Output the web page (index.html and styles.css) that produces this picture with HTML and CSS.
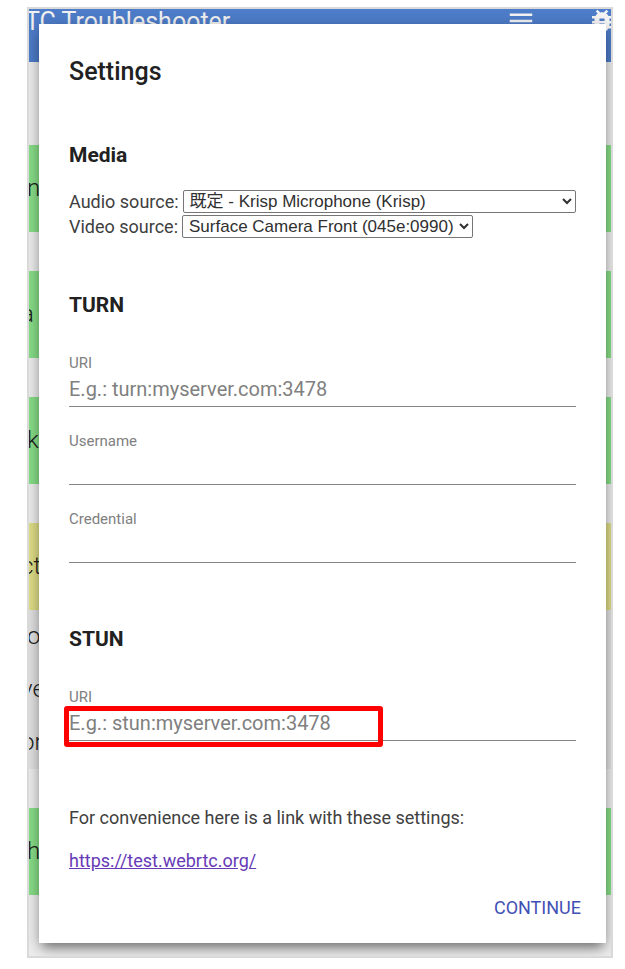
FILE: index.html
```html
<!DOCTYPE html>
<html lang="en">
<head>
<meta charset="UTF-8">
<meta name="viewport" content="width=device-width, initial-scale=1.0">
<title>WebRTC Troubleshooter</title>
<link rel="stylesheet" href="styles.css">
</head>
<body>
<div class="frame">
    <!-- page behind the dialog -->
    <div class="page">
        <div class="toolbar">
            <span class="toolbar-title">TC Troubleshooter</span>
            <svg class="icon menu" viewBox="0 0 24 24"><path d="M3 18h18v-2H3v2zm0-5h18v-2H3v2zm0-7v2h18V6H3z"/></svg>
            <svg class="icon bug" viewBox="0 0 24 24"><path d="M20 8h-2.81c-.45-.78-1.07-1.45-1.82-1.96L17 4.41 15.59 3l-2.17 2.17C12.96 5.06 12.49 5 12 5s-.96.06-1.41.17L8.41 3 7 4.41l1.62 1.63C7.88 6.55 7.26 7.22 6.81 8H4v2h2.09c-.05.33-.09.66-.09 1v1H4v2h2v1c0 .34.04.67.09 1H4v2h2.81c1.04 1.79 2.97 3 5.19 3s4.15-1.21 5.19-3H20v-2h-2.09c.05-.33.09-.66.09-1v-1h2v-2h-2v-1c0-.34-.04-.67-.09-1H20V8zm-6 8h-4v-2h4v2zm0-4h-4v-2h4v2z"/></svg>
        </div>
        <div class="suites">
            <div class="suite">n</div>
            <div class="suite cut">a</div>
            <div class="suite">k</div>
            <div class="group">
                <div class="suite warning cut">ct</div>
                <div class="test">o</div>
                <div class="test cut">ve</div>
                <div class="test cut">or</div>
            </div>
            <div class="suite">h</div>
        </div>
    </div>

    <!-- settings dialog -->
    <div class="dialog" role="dialog" aria-labelledby="title">
        <h1 id="title">Settings</h1>

        <h2>Media</h2>
        <div class="source">
            <label for="audio">Audio source:</label>
            <select id="audio" class="wide"><option>既定 - Krisp Microphone (Krisp)</option></select>
        </div>
        <div class="source">
            <label for="video">Video source:</label>
            <select id="video"><option>Surface Camera Front (045e:0990)</option></select>
        </div>

        <h2>TURN</h2>
        <div class="field">
            <label for="turn-uri">URI</label>
            <input type="text" id="turn-uri" placeholder="E.g.: turn:myserver.com:3478">
        </div>
        <div class="field">
            <label for="username">Username</label>
            <input type="text" id="username">
        </div>
        <div class="field">
            <label for="credential">Credential</label>
            <input type="text" id="credential">
        </div>

        <h2 class="stun">STUN</h2>
        <div class="field marked">
            <label for="stun-uri">URI</label>
            <input type="text" id="stun-uri" placeholder="E.g.: stun:myserver.com:3478">
            <div class="mark"></div>
        </div>

        <p class="note">For convenience here is a link with these settings:</p>
        <p class="link"><a href="https://test.webrtc.org/">https://test.webrtc.org/</a></p>
        <div class="buttons"><button type="button">CONTINUE</button></div>
    </div>
</div>
</body>
</html>
```

FILE: styles.css
```css
* { box-sizing: border-box; margin: 0; padding: 0; }
body { background: #fff; color: #404040; font-family: Roboto, "Noto Sans CJK JP", sans-serif; font-size: 18px; }

.frame { display: grid; margin: 7px 12px 11px 27px; border: 2px solid #d9d9d9; overflow: hidden; }
.page, .dialog { grid-area: 1 / 1; min-width: 0; }

.page { background: #eee; overflow: hidden; }
.toolbar { display: flex; align-items: flex-start; height: 53px; background: #4e7dca; color: #f2f2f2; overflow: hidden; }
.toolbar-title { flex: 1; margin-left: -4px; font-size: 25px; line-height: 26px; white-space: nowrap; }
.icon { flex: none; width: 30px; height: 30px; margin-top: -3px; fill: #f5f5f5; }
.menu { margin-right: 51px; }
.bug { margin-right: -6px; }

.suites { display: flex; flex-direction: column; gap: 39px; padding-top: 83px; }
.suite, .test { height: 87px; color: #202020; font-size: 24px; font-weight: 300; line-height: 87px; text-indent: -2px; }
.suite { background: #88df88; }
.suite.warning { background: #e0df88; }
.group { background: #e2e2e2; }
.test { height: 53px; line-height: 53px; }
.cut { text-indent: -8px; }

.dialog { margin: 15px 5px 13px 10px; padding: 32px 30px 24px; background: #fff; box-shadow: 0 4px 16px rgba(0,0,0,.3), 0 8px 10px -4px rgba(0,0,0,.35); }
h1 { color: #212121; font-size: 25px; font-weight: 500; line-height: 32px; margin-bottom: 55px; }
h2 { color: #212121; font-size: 21px; font-weight: 700; line-height: 24px; }

.source { display: flex; align-items: center; gap: 4px; height: 25px; }
h2 + .source { margin-top: 22px; }
.source label { white-space: nowrap; }
select { height: 23px; min-width: 0; padding: 0 2px; border: 1px solid #767676; border-radius: 2px; background: #fff; color: #303030; font-family: "Liberation Sans", "Noto Sans CJK JP", sans-serif; font-size: 17px; }
.wide { flex: 1; }
.source + h2 { margin-top: 54px; }

.field { margin-top: 25px; }
h2 + .field { margin-top: 37px; }
.field label { display: block; color: #808080; font-size: 15px; line-height: 18px; }
.field input { display: block; width: 100%; height: 35px; border: 0; border-bottom: 1px solid #858585; background: none; outline: 0; font-family: inherit; font-size: 20px; color: #212121; }
.field input::placeholder { color: #808080; }
.stun { margin-top: 64px; }

/* red box round the STUN address */
.marked { position: relative; }
.mark { position: absolute; top: 18px; left: -5px; width: 319px; height: 41px; border: 5px solid #f00; border-radius: 3px; pointer-events: none; }

.note { margin-top: 65px; line-height: 24px; }
.link { margin-top: 19px; line-height: 24px; }
.link a { color: #673ab7; }
.buttons { margin: 24px -5px 0 0; text-align: right; }
button { display: inline-block; height: 22px; border: 0; background: none; color: #3f51b5; font-family: inherit; font-size: 18px; line-height: 22px; }
```
